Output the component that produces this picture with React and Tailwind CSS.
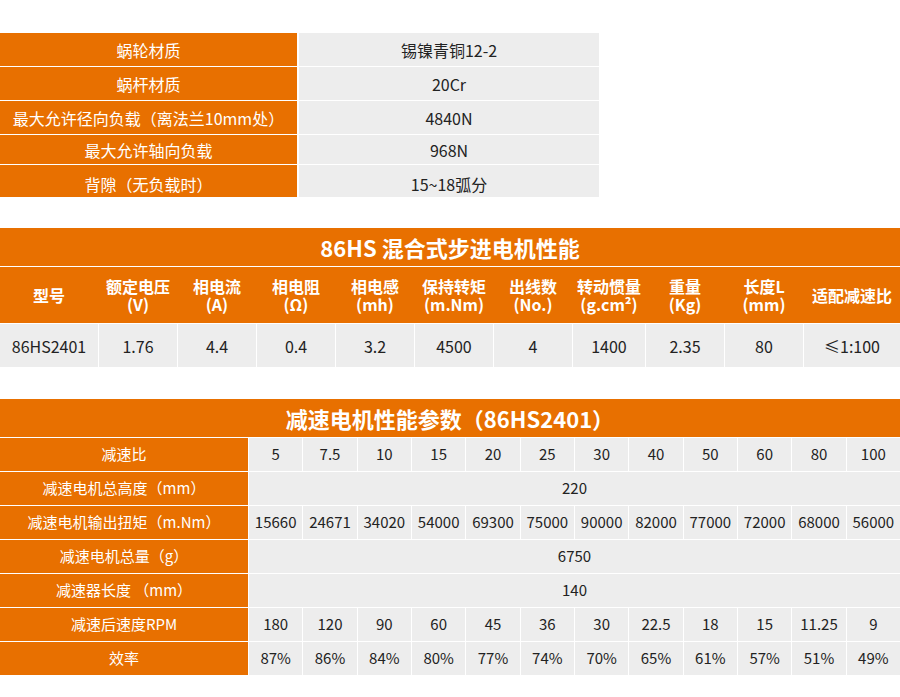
const font = { fontFamily: '"Noto Sans CJK SC", "Noto Sans", sans-serif' };

const material = [
  ["蜗轮材质", "锡镍青铜12-2", "h-[33px]"],
  ["蜗杆材质", "20Cr", "h-[33px]"],
  ["最大允许径向负载（离法兰10mm处）", "4840N", "h-[33px]"],
  ["最大允许轴向负载", "968N", "h-[29px]"],
  ["背隙（无负载时）", "15~18弧分", "h-[32px] pt-[5px]"],
];

const motorHead = [
  ["型号"],
  ["额定电压", "(V)"],
  ["相电流", "(A)"],
  ["相电阻", "(Ω)"],
  ["相电感", "(mh)"],
  ["保持转矩", "(m.Nm)"],
  ["出线数", "(No.)"],
  ["转动惯量", "(g.cm²)"],
  ["重量", "(Kg)"],
  ["长度L", "(mm)"],
  ["适配减速比"],
];

const motorRow = ["86HS2401", "1.76", "4.4", "0.4", "3.2", "4500", "4", "1400", "2.35", "80", "≤1:100"];

const gearRows = [
  ["减速比", ["5", "7.5", "10", "15", "20", "25", "30", "40", "50", "60", "80", "100"]],
  ["减速电机总高度（mm）", "220"],
  ["减速电机输出扭矩（m.Nm）", ["15660", "24671", "34020", "54000", "69300", "75000", "90000", "82000", "77000", "72000", "68000", "56000"]],
  ["减速电机总量（g）", "6750"],
  ["减速器长度 （mm）", "140"],
  ["减速后速度RPM", ["180", "120", "90", "60", "45", "36", "30", "22.5", "18", "15", "11.25", "9"]],
  ["效率", ["87%", "86%", "84%", "80%", "77%", "74%", "70%", "65%", "61%", "57%", "51%", "49%"]],
];

const motorCols = "grid grid-cols-[98px_78px_78px_78px_78px_78px_78px_72px_78px_78px_1fr] gap-x-px";

export default function App() {
  return (
    <div className="w-[900px] bg-white pt-[33px] pb-[21px] text-[15px] text-[#222]" style={font}>
      {/* material table */}
      <div className="flex w-[599px] flex-col gap-y-px text-[16px]">
        {material.map(([k, v, h]) => (
          <div key={k} className={`grid grid-cols-[297px_300px] gap-x-[2px] ${h.split(" ")[0]}`}>
            <div className={`flex items-center justify-center bg-[#e87000] text-white ${h.split(" ")[1] || ""}`}>{k}</div>
            <div className={`flex items-center justify-center bg-[#ededed] ${h.split(" ")[1] || ""}`}>{v}</div>
          </div>
        ))}
      </div>

      {/* motor table */}
      <div className="mt-[31px] flex flex-col gap-y-px">
        <div className="flex h-[38px] items-center justify-center bg-[#e87000] text-[22px] font-bold text-white">
          86HS 混合式步进电机性能
        </div>
        <div className={`${motorCols} h-[56px] bg-[#e87000] text-[16px] font-bold text-white`}>
          {motorHead.map((lines, i) => (
            <div key={i} className="flex flex-col items-center justify-center leading-[18px]">
              {lines.map((l) => (
                <span key={l}>{l}</span>
              ))}
            </div>
          ))}
        </div>
        <div className={`${motorCols} h-[43px] bg-white`}>
          {motorRow.map((v, i) => (
            <div key={i} className="flex items-center justify-center bg-[#ededed] text-[16px]">
              {v}
            </div>
          ))}
        </div>
      </div>

      {/* gearbox table */}
      <div className="mt-[32px] flex flex-col gap-y-px">
        <div className="flex h-[38px] items-center justify-center bg-[#e87000] text-[22px] font-bold text-white">
          减速电机性能参数（86HS2401）
        </div>
        {gearRows.map(([k, v]) => (
          <div key={k} className="grid h-[33px] grid-cols-[248px_1fr] gap-x-px">
            <div className="flex items-center justify-center bg-[#e87000] text-white">{k}</div>
            {Array.isArray(v) ? (
              <div className="grid grid-cols-12 gap-x-px">
                {v.map((c, i) => (
                  <div key={i} className="flex items-center justify-center bg-[#ededed]">
                    {c}
                  </div>
                ))}
              </div>
            ) : (
              <div className="flex items-center justify-center bg-[#ededed]">{v}</div>
            )}
          </div>
        ))}
      </div>
    </div>
  );
}
